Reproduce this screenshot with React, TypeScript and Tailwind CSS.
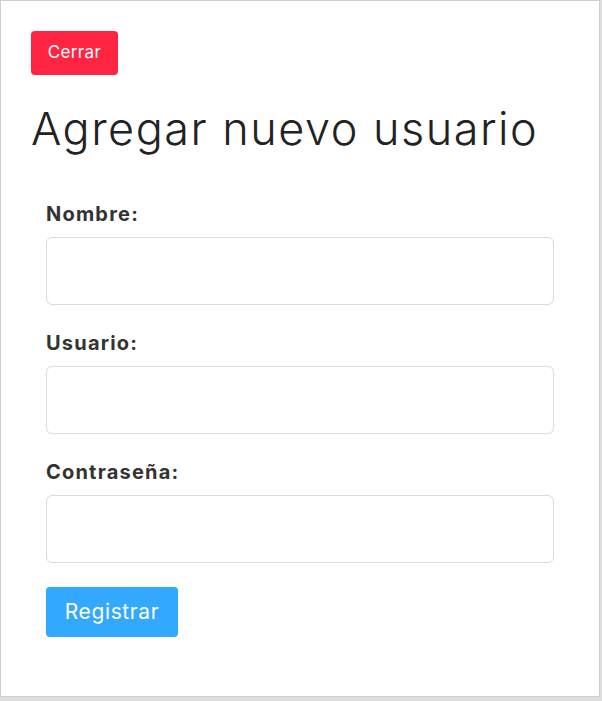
export default function App() {
  return (
    <div className="h-[701px] w-[602px] bg-[#dedede] font-['Inter',sans-serif]">
      <div className="h-[697px] w-[600px] border border-[#cfcfcf] bg-white pl-[30px] pt-[30px]">
        <button className="h-[44px] w-[87px] rounded-[4px] bg-[#ff2442] text-[17px] tracking-[0.4px] text-white">
          Cerrar
        </button>

        <h1 className="mt-[26px] text-[45px] font-light leading-[56px] tracking-[1.5px] text-[#222]">
          Agregar nuevo usuario
        </h1>

        <form className="mt-[45px] flex w-[508px] flex-col gap-[26px] pl-[15px]">
          <Field label="Nombre:" />
          <Field label="Usuario:" />
          <Field label="Contraseña:" />
          <button
            type="button"
            className="-mt-[2px] h-[50px] w-[132px] rounded-[4px] bg-[#33a8ff] text-[21px] tracking-[0.6px] text-white"
          >
            Registrar
          </button>
        </form>
      </div>
    </div>
  )
}

function Field({ label }: { label: string }) {
  return (
    <div>
      <label className="mb-[11px] block text-[20px] font-bold leading-[24px] tracking-[1.2px] text-[#333]">
        {label}
      </label>
      <input className="block h-[68px] w-[508px] rounded-[6px] border border-[#dcdcdc] bg-white" />
    </div>
  )
}
